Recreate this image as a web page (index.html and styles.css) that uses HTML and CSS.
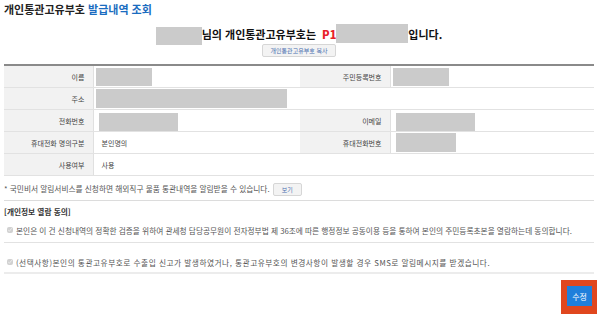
FILE: index.html
```html
<!DOCTYPE html>
<html lang="ko">
<head>
    <meta charset="UTF-8">
    <meta name="viewport" content="width=device-width, initial-scale=1.0">
    <title>개인통관고유부호 발급내역 조회</title>
    <link rel="stylesheet" href="styles.css">
</head>
<body>

    <h2 class="title">개인통관고유부호 <span class="title-sub">발급내역 조회</span></h2>

    <div class="result">
        <p class="result-line">
            <span class="mask mask-user"></span>님의 개인통관고유부호는 <strong class="code">P1</strong><span class="mask mask-code"></span>입니다.
        </p>
        <button type="button" class="btn-small btn-copy">개인통관고유부호 복사</button>
    </div>

    <table class="info">
        <colgroup>
            <col class="c-label">
            <col class="c-value">
            <col class="c-label2">
            <col>
        </colgroup>
        <tr>
            <th>이름</th>
            <td><span class="mask mask-name"></span></td>
            <th>주민등록번호</th>
            <td><span class="mask mask-name"></span></td>
        </tr>
        <tr>
            <th>주소</th>
            <td colspan="3"><span class="mask mask-addr"></span></td>
        </tr>
        <tr>
            <th>전화번호</th>
            <td class="pad"><span class="mask mask-phone"></span></td>
            <th>이메일</th>
            <td class="pad"><span class="mask mask-mail"></span></td>
        </tr>
        <tr>
            <th>휴대전화 명의구분</th>
            <td class="text">본인명의</td>
            <th>휴대전화번호</th>
            <td class="pad"><span class="mask mask-mobile"></span></td>
        </tr>
        <tr>
            <th>사용여부</th>
            <td class="text" colspan="3">사용</td>
        </tr>
    </table>

    <p class="notice">* 국민비서 알림서비스를 신청하면 해외직구 물품 통관내역을 알림받을 수 있습니다. <button type="button" class="btn-small btn-view">보기</button></p>

    <div class="agree">
        <h3 class="agree-title">[개인정보 열람 동의]</h3>
        <label class="agree-row agree-first">
            <input type="checkbox" checked disabled>
            본인은 이 건 신청내역의 정확한 검증을 위하여 관세청 담당공무원이 전자정부법 제 36조에 따른 행정정보 공동이용 등을 통하여 본인의 주민등록초본을 열람하는데 동의합니다.
        </label>
        <label class="agree-row agree-last">
            <input type="checkbox" checked disabled>
            <span class="wide">(선택사항)본인의 통관고유부호로 수출입 신고가 발생하였거나, 통관고유부호의 변경사항이 발생할 경우 SMS로 알림메시지를 받겠습니다.</span>
        </label>
    </div>

    <div class="actions">
        <span class="highlight"><button type="button" class="btn-edit">수정</button></span>
    </div>

</body>
</html>
```

FILE: styles.css
```css
body {
    font-family: "Noto Sans CJK KR", "Noto Sans", sans-serif;
    margin: 0;
    padding: 0 6px 0 4px;
    background-color: #fff;
    color: #333;
}

.title {
    margin: 0;
    padding-top: 1px;
    font-size: 11px;
    line-height: 16px;
    font-weight: bold;
    color: #222;
}

.title-sub {
    color: #1a6cc0;
}

.result {
    display: flex;
    flex-direction: column;
    align-items: center;
    margin-top: 6px;
}

.result-line {
    display: flex;
    align-items: center;
    margin: 0;
    font-size: 11px;
    font-weight: bold;
    color: #111;
    height: 22px;
}

.code {
    color: #e8202a;
    margin-left: 6px;
}

.mask {
    display: inline-block;
    background-color: #cbcbcb;
    vertical-align: middle;
}

.mask-user {
    width: 46px;
    height: 18px;
    margin-top: 4px;
}

.mask-code {
    width: 72px;
    height: 19px;
    margin-top: -2px;
}

.btn-small {
    font-family: inherit;
    font-size: 6px;
    line-height: 9px;
    padding: 1px 8px;
    border: 1px solid #d6d6d6;
    border-radius: 2px;
    background-color: #f3f3f3;
    color: #4a6fb0;
    cursor: pointer;
}

.btn-copy {
    margin-top: -1px;
}

.info {
    width: 100%;
    margin-top: 7px;
    border-collapse: collapse;
    border-top: 2px solid #8a8a8a;
    font-size: 7px;
}

.c-label {
    width: 89px;
}

.c-value {
    width: 207px;
}

.c-label2 {
    width: 90px;
}

.info th,
.info td {
    height: 21px;
    padding: 0;
    border-bottom: 1px solid #e2e2e2;
}

.info th {
    background-color: #f2f2f2;
    border-right: 1px solid #e0e0e0;
    text-align: right;
    padding-right: 8px;
    font-weight: normal;
    color: #444;
}

.info td {
    padding-left: 2px;
}

.info td.pad {
    padding-left: 5px;
}

.info td.text {
    padding-left: 8px;
    color: #444;
}

.mask-name {
    width: 56px;
    height: 18px;
}

.mask-addr {
    width: 191px;
    height: 19px;
}

.mask-phone,
.mask-mail {
    width: 79px;
    height: 18px;
    margin-top: 2px;
}

.mask-mobile {
    width: 60px;
    height: 19px;
}

.notice {
    margin: 6px 0 0;
    padding-bottom: 4px;
    border-bottom: 1px solid #dcdcdc;
    font-size: 7.7px;
    line-height: 14px;
    color: #555;
}

.btn-view {
    margin-left: 1px;
    padding: 1px 8px;
}

.agree-title {
    margin: 6px 0 0;
    font-size: 7.7px;
    line-height: 10px;
    font-weight: bold;
    color: #333;
}

.agree-row {
    display: flex;
    align-items: center;
    gap: 3px;
    height: 10px;
    border-bottom: 1px solid #e2e2e2;
    font-size: 7.7px;
    color: #555;
    white-space: nowrap;
}

.agree-row input {
    width: 6px;
    height: 6px;
    margin: 0 0 0 3px;
}

.agree-first {
    padding: 8px 0 7px;
}

.agree-last {
    padding: 14px 0 5px;
    border-bottom: 2px solid #ececec;
}

.wide {
    letter-spacing: 0.5px;
}

.actions {
    display: flex;
    justify-content: flex-end;
    margin-top: 6px;
    margin-right: -3px;
}

.highlight {
    display: inline-block;
    padding: 6px 5px 8px 6px;
    background-color: #e0471e;
}

.btn-edit {
    display: block;
    width: 25px;
    height: 20px;
    padding: 0;
    border: none;
    background-color: #1f7fdb;
    color: #fff;
    font-family: inherit;
    font-size: 8px;
    cursor: pointer;
}
```
